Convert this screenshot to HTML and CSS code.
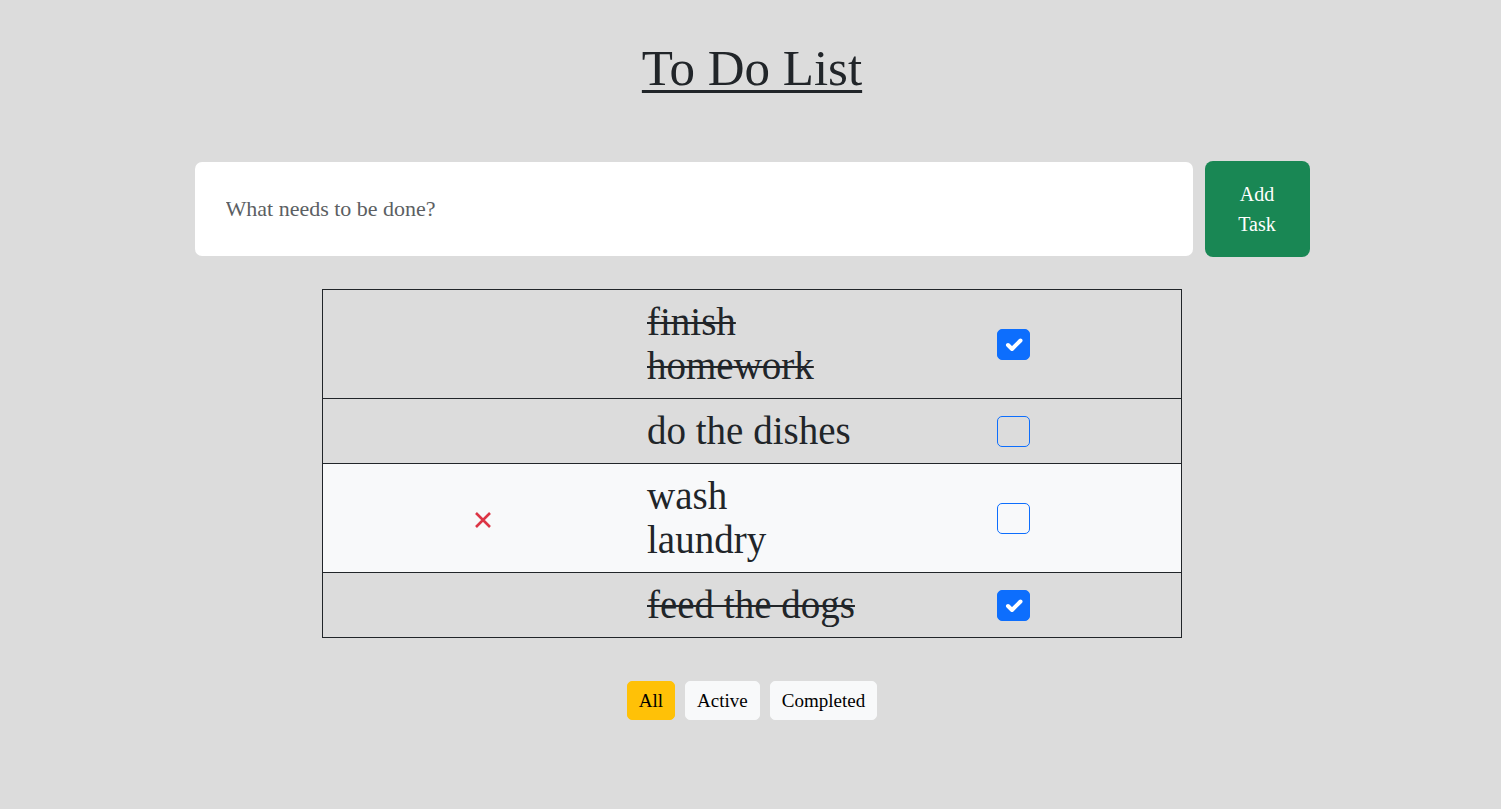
FILE: index.html
```html
<!DOCTYPE html>
<html lang="en">
<head>
<meta charset="utf-8">
<title>To Do List</title>
<link rel="stylesheet" href="styles.css">
</head>
<body>
<main class="page">
  <h1 class="title">To Do List</h1>
  <form class="add-form">
    <input class="task-input" type="text" placeholder="What needs to be done?">
    <button class="add-btn" type="button">Add Task</button>
  </form>
  <div class="todo-table">
    <div class="todo-row done">
      <div class="cell-del"></div>
      <div class="cell-text"><span class="task-text">finish homework</span></div>
      <div class="cell-check"><span class="check checked"><svg width="33" height="31" viewBox="0 0 33 31"><path d="M11 16 L15 20 L23.5 11.5" fill="none" stroke="#fff" stroke-width="4" stroke-linecap="round" stroke-linejoin="round"/></svg></span></div>
    </div>
    <div class="todo-row">
      <div class="cell-del"></div>
      <div class="cell-text"><span class="task-text">do the dishes</span></div>
      <div class="cell-check"><span class="check"></span></div>
    </div>
    <div class="todo-row hovered">
      <div class="cell-del"><svg class="del-icon" width="18" height="18" viewBox="0 0 18 18"><path d="M2 2 L16 16 M16 2 L2 16" stroke="#dc3545" stroke-width="2.6" stroke-linecap="butt"/></svg></div>
      <div class="cell-text"><span class="task-text">wash laundry</span></div>
      <div class="cell-check"><span class="check"></span></div>
    </div>
    <div class="todo-row done">
      <div class="cell-del"></div>
      <div class="cell-text"><span class="task-text">feed the dogs</span></div>
      <div class="cell-check"><span class="check checked"><svg width="33" height="31" viewBox="0 0 33 31"><path d="M11 16 L15 20 L23.5 11.5" fill="none" stroke="#fff" stroke-width="4" stroke-linecap="round" stroke-linejoin="round"/></svg></span></div>
    </div>
  </div>
  <div class="filters">
    <button class="filter selected" type="button">All</button>
    <button class="filter" type="button">Active</button>
    <button class="filter" type="button">Completed</button>
  </div>
</main>
</body>
</html>
```
FILE: styles.css
```css
html, body {
  margin: 0;
  background: #dcdcdc;
}
body {
  font-family: "Liberation Serif", "Times New Roman", serif;
  color: #212529;
}
.page {
  display: flex;
  flex-direction: column;
  align-items: center;
  padding-top: 38px;
  padding-left: 3px;
}
.title {
  margin: 0;
  font-size: 51px;
  line-height: 60px;
  font-weight: 400;
  text-decoration: underline;
  text-decoration-thickness: 3px;
  text-underline-offset: 5px;
}
.add-form {
  margin-top: 63px;
  display: flex;
  align-items: center;
  gap: 12px;
}
.task-input {
  box-sizing: border-box;
  width: 998px;
  height: 94px;
  border: none;
  border-radius: 7px;
  background: #fff;
  padding: 0 31px;
  font-family: inherit;
  font-size: 22px;
  color: #212529;
  outline: none;
}
.task-input::placeholder {
  color: #5c5f63;
}
.add-btn {
  box-sizing: border-box;
  width: 105px;
  height: 96px;
  border: none;
  border-radius: 8px;
  background: #198754;
  color: #fff;
  font-family: inherit;
  font-size: 20px;
  line-height: 30px;
  padding: 0 16px;
}
.todo-table {
  margin-top: 32px;
  width: 860px;
  box-sizing: border-box;
  border: 1px solid #212529;
}
.todo-row {
  display: grid;
  grid-template-columns: 320px 354px 1fr;
  align-items: center;
  padding: 10px 0;
}
.todo-row + .todo-row {
  border-top: 1px solid #212529;
}
.todo-row.hovered {
  background: #f8f9fa;
}
.cell-del {
  display: flex;
  justify-content: center;
  align-items: center;
}
.del-icon {
  display: block;
  margin-top: 3px;
}
.cell-text {
  padding-left: 4px;
}
.task-text {
  display: block;
  max-width: 208.5px;
  font-size: 39px;
  line-height: 44px;
}
.done .task-text {
  text-decoration: line-through;
  text-decoration-thickness: 2px;
}
.cell-check {
  display: flex;
  align-items: center;
}
.check {
  box-sizing: border-box;
  width: 33px;
  height: 31px;
  border: 1px solid #0d6efd;
  border-radius: 5px;
  display: block;
  position: relative;
  margin-top: 1px;
}
.check svg {
  position: absolute;
  left: -1px;
  top: -1px;
}
.check.checked {
  background: #0d6efd;
}
.filters {
  margin-top: 43px;
  display: flex;
  gap: 10px;
}
.filter {
  font-family: inherit;
  font-size: 19px;
  line-height: 25px;
  padding: 6px 11px;
  border: 1px solid #f8f9fa;
  border-radius: 5px;
  background: #f8f9fa;
  color: #000;
}
.filter.selected {
  background: #ffc107;
  border-color: #ffc107;
}
```
